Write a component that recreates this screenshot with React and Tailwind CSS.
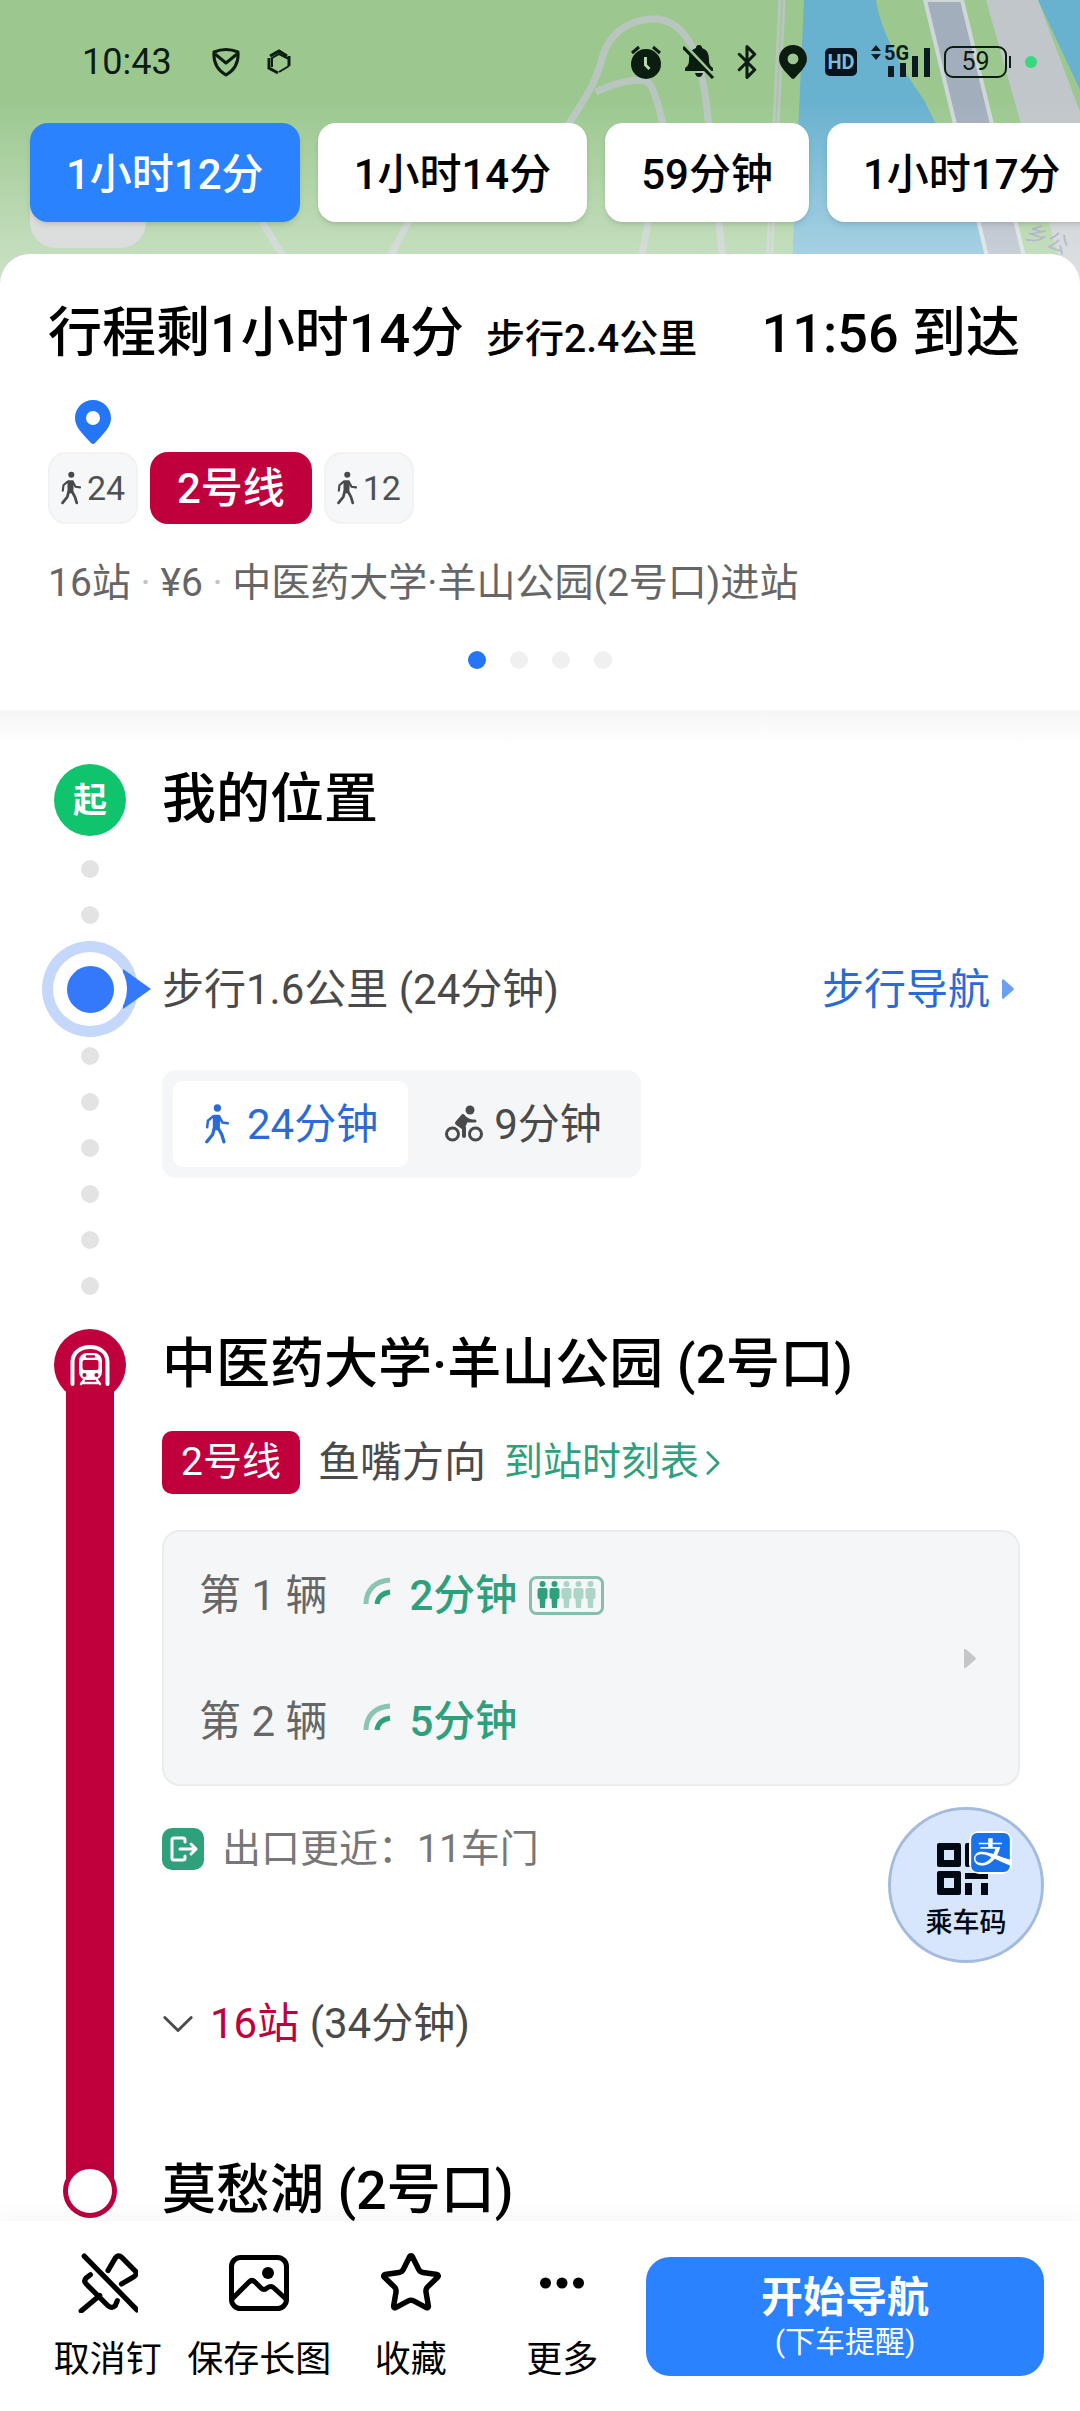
import React, { useState } from 'react';
import clsx from 'clsx';
import { Bluetooth, ChevronDown, ChevronRight, Star } from 'lucide-react';
import { SiAlipay } from 'react-icons/si';

const routes = ['1小时12分', '1小时14分', '59分钟', '1小时17分'];

const departures = [
  { order: '第 1 辆', wait: '2分钟', crowd: 2 },
  { order: '第 2 辆', wait: '5分钟' },
];

const PinIcon = ({ className }) => (
  <svg viewBox="0 0 36 44" className={className} fill="currentColor" aria-hidden="true">
    <path d="M18 0C8 0 0 8 0 18c0 9 7 15 16 25q2 2 4 0c9-10 16-16 16-25C36 8 28 0 18 0zm0 11a7 7 0 1 1 0 14 7 7 0 0 1 0-14z" />
  </svg>
);

const WalkIcon = ({ className }) => (
  <svg viewBox="-2 0 66 110" className={className} fill="none" stroke="currentColor" strokeLinecap="round" strokeLinejoin="round" aria-hidden="true">
    <circle cx="32" cy="11" r="10" fill="currentColor" stroke="none" />
    <path d="M24 34h12l-2 34H24z" fill="currentColor" strokeWidth="9" />
    <path d="M20 34L6 46 4 64M38 36l8 15 15 2" strokeWidth="7" />
    <path d="M34 66l10 18 6 20M23 68l-4 16L3 104" strokeWidth="9" />
  </svg>
);

const BikeIcon = ({ className }) => (
  <svg viewBox="0 0 38 40" className={className} fill="none" stroke="currentColor" strokeLinecap="round" strokeLinejoin="round" aria-hidden="true">
    <circle cx="7.5" cy="30" r="6" strokeWidth="3" />
    <circle cx="30.5" cy="30" r="6" strokeWidth="3" />
    <circle cx="25" cy="6" r="4.5" fill="currentColor" stroke="none" />
    <path d="M18 12l-6 7 7 5v8" strokeWidth="4" />
    <path d="M18 12l6 5h6M13 19l5-7 4 4-3 6z" strokeWidth="3" fill="currentColor" />
  </svg>
);

const Triangle = ({ className }) => (
  <svg viewBox="0 0 12 20" className={className} fill="currentColor" aria-hidden="true">
    <path d="M0 1.5Q0-.5 2 .8L11.4 9q1 1 0 2L2 19.2Q0 20.5 0 18.5z" />
  </svg>
);

const MapBackdrop = () => (
  <svg viewBox="0 0 1080 290" preserveAspectRatio="xMidYMin slice" className="absolute inset-x-0 top-0 h-[290px] w-full" aria-hidden="true">
    <defs>
      <linearGradient id="fade" x1="0" y1="0" x2="0" y2="1">
        <stop offset="0.35" stopColor="#fff" stopOpacity="0" />
        <stop offset="1" stopColor="#fff" stopOpacity="0.5" />
      </linearGradient>
    </defs>
    <rect width="1080" height="290" fill="#9cc890" />
    <g fill="none" stroke="#b9c6c0" strokeWidth="7">
      <path d="M565 130C590 90 595 85 603 55 612 28 635 18 658 19 690 24 700 60 706 100L726 290" />
      <path d="M596 92C625 78 645 78 650 84 656 95 660 110 664 130L636 290" />
      <path d="M782 0L768 290M262 222l42 68M412 215l-40 75" />
    </g>
    <path d="M782 0L768 290" fill="none" stroke="#a9c5a0" strokeWidth="2" />
    <path d="M804 0h72c5 30 20 60 48 100 20 40 35 70 82 190H791z" fill="#69b2cf" />
    <path d="M925 0h37l70 290h-37z" fill="#a2aebc" stroke="#cfd6d8" strokeWidth="4" />
    <path d="M986 0h52l60 160v130h-30z" fill="#c0c6c9" />
    <path d="M1038 0h42v90z" fill="#69b2cf" />
    <text x="1024" y="238" transform="rotate(22 1024 238)" fill="#8a90ae" fontSize="22">乡公</text>
    <rect width="1080" height="290" fill="url(#fade)" />
    <rect x="30" y="160" width="116" height="88" rx="26" fill="#dcdedd" />
  </svg>
);

const StatusBar = () => (
  <div className="relative flex h-12 items-center justify-between pr-[43px] pl-[82px] text-[#0b1c10]">
    <div className="flex items-center">
      <span className="text-[36px]">10:43</span>
      <svg viewBox="0 0 28 30" className="ml-10 h-[30px] w-7" fill="none" stroke="currentColor" strokeWidth="3" strokeLinejoin="round" aria-hidden="true">
        <path d="M2 5q12-5 24 0c1 12-5 19-12 23C7 24 1 17 2 5z" />
        <path d="M3 7l11 9L25 7" />
      </svg>
      <svg viewBox="0 0 24 26" className="ml-[27px] h-[26px] w-6" fill="none" stroke="currentColor" strokeWidth="2" aria-hidden="true">
        <path d="M2 9v10l9 5M22 17V7M3 7l9-5 8 5" strokeWidth="3" />
        <path d="M5 18V9l7-4 10 5M22 17l-10 6" />
      </svg>
    </div>
    <div className="flex items-center gap-[18px]">
      <div className="flex items-center gap-[21px]">
        <svg viewBox="0 0 32 34" className="h-[34px] w-8" aria-hidden="true">
          <circle cx="16" cy="19" r="15" fill="currentColor" />
          <path d="M2 8l7-6M30 8l-7-6" fill="none" stroke="currentColor" strokeWidth="3" />
          <path d="M15.5 12v8l4 4" fill="none" stroke="#b6d8ac" strokeWidth="3" />
        </svg>
        <svg viewBox="0 0 32 34" className="h-[34px] w-8" aria-hidden="true">
          <path d="M16 0q3 0 3 3c6 2 7 7 7 12 0 4 1 6 4 8v3H2v-3c3-2 4-4 4-8 0-5 1-10 7-12q0-3 3-3zM12 28h8q-1 4-4 4t-4-4z" fill="currentColor" />
          <path d="M2 0l30 32" stroke="#9cc890" strokeWidth="3" />
          <path d="M0 2l30 31" stroke="currentColor" strokeWidth="3" />
        </svg>
        <Bluetooth className="h-[34px] w-[22px]" viewBox="5.5 1 13 22" strokeWidth={2} />
        <PinIcon className="h-[34px] w-7" />
      </div>
      <div className="flex items-center gap-[14px]">
        <span className="flex h-7 w-8 items-center justify-center rounded-[5px] bg-[#04141f] text-[20px] font-bold text-[#7dbdd6]">HD</span>
        <div className="flex h-[34px] items-start gap-[3px] text-[#0b1c20]">
          <svg viewBox="0 0 10 16" className="h-4 w-[10px]" fill="currentColor" aria-hidden="true">
            <path d="M0 6l5-6 5 6zM0 9h10l-5 6z" />
          </svg>
          <div className="relative h-[34px] w-[46px]">
            <span className="absolute top-0 left-0 text-[20px] leading-4 font-bold">5G</span>
            <svg viewBox="0 0 46 34" className="h-[34px] w-[46px]" fill="currentColor" aria-hidden="true">
              <path d="M4 21h6v11H4zM16 18h6v14h-6zM28 11h6v21h-6zM40 3h6v29h-6z" />
            </svg>
          </div>
        </div>
        <div className="flex items-center gap-[2px]">
          <span className="flex h-8 w-[63px] items-center justify-center rounded-[9px] border-2 border-current text-[25px]">59</span>
          <span className="h-3 w-[2px] bg-current" />
        </div>
        <span className="size-3 rounded-full bg-[#38d97c]" />
      </div>
    </div>
  </div>
);

const RouteTabs = ({ active, onChange }) => (
  <div className="relative mt-[37px] flex gap-[18px] pl-[30px]">
    {routes.map((label, index) => (
      <button
        key={label}
        type="button"
        onClick={() => onChange(index)}
        className={clsx(
          'h-[99px] shrink-0 rounded-[18px] px-9 pt-1 text-[42px] font-medium shadow-md',
          index === active ? 'bg-[#2b82ff] text-white' : 'bg-white text-black'
        )}
      >
        {label}
      </button>
    ))}
  </div>
);

const WalkSegment = ({ minutes }) => (
  <div className="flex h-[72px] w-[90px] items-center justify-center gap-[6px] rounded-[18px] border-2 border-[#f0f2f4] bg-[#f5f7f8] text-[34px] text-[#4e5052]">
    <WalkIcon className="h-9 w-5 text-[#47494b]" />
    {minutes}
  </div>
);

const Summary = ({ active }) => (
  <section className="relative mt-8 rounded-t-[30px] bg-white pt-11 pb-[41px]">
    <div className="flex h-[72px] items-baseline justify-between pr-[60px] pl-12 leading-[72px]">
      <h1 className="text-[54px] font-medium">
        行程剩1小时14分<span className="ml-[22px] text-[39px]">步行2.4公里</span>
      </h1>
      <p className="text-[54px] font-medium">11:56 到达</p>
    </div>
    <div className="mt-[30px] flex items-end gap-3 px-12">
      <div className="flex flex-col items-center gap-2">
        <PinIcon className="h-11 w-9 text-[#2476f7]" />
        <WalkSegment minutes={24} />
      </div>
      <div className="flex h-[72px] items-center rounded-[18px] bg-[#c0003c] px-[27px] text-[42px] font-medium text-white">2号线</div>
      <WalkSegment minutes={12} />
    </div>
    <p className="mt-8 px-12 text-[39px] leading-[54px] text-[#666]">
      16站 <span className="text-[#c4c4c4]">·</span> ¥6 <span className="text-[#c4c4c4]">·</span> 中医药大学·羊山公园(2号口)进站
    </p>
    <div className="mt-[41px] flex justify-center gap-6">
      {routes.map((label, index) => (
        <span key={label} className={clsx('size-[18px] rounded-full', index === active ? 'bg-[#2476f7]' : 'bg-[#f0f0f0]')} />
      ))}
    </div>
  </section>
);

const Dots = ({ count }) => (
  <>
    {Array.from({ length: count }).map((_, index) => (
      <span key={index} className="size-[18px] shrink-0 rounded-full bg-[#e3e3e3]" />
    ))}
  </>
);

// One row of the timeline: the rail on the left, details on the right
const Step = ({ rail, children }) => (
  <div className="flex pr-[60px] pl-6">
    <div className="flex w-[132px] shrink-0 flex-col items-center">{rail}</div>
    <div className="min-w-0 flex-1 pl-[6px]">{children}</div>
  </div>
);

const StepTitle = ({ children }) => <h2 className="text-[54px] leading-[72px] font-medium">{children}</h2>;

const LocationMarker = () => (
  <div className="relative flex size-24 items-center justify-center rounded-full bg-[#c5d7fb]">
    <svg viewBox="0 0 30 40" className="absolute top-7 -right-[13px] h-10 w-[30px]" fill="#3478fb" aria-hidden="true">
      <path d="M2 0L30 20 2 40z" />
    </svg>
    <span className="relative flex size-[74px] items-center justify-center rounded-full bg-white">
      <span className="size-[47px] rounded-full bg-[#3478fb]" />
    </span>
  </div>
);

const MetroMarker = () => (
  <svg viewBox="0 0 72 72" className="relative size-[72px] shrink-0" fill="none" strokeLinecap="round" aria-hidden="true">
    <circle cx="36" cy="36" r="36" fill="#c0003c" />
    <path d="M18.5 55V33c0-20 35-20 35 0v22" stroke="#fff" strokeWidth="4" />
    <rect x="25" y="24" width="23" height="27" rx="8" fill="#fff" />
    <rect x="28.5" y="31" width="16" height="10" rx="2" fill="#c0003c" />
    <path d="M33 27.5h7" stroke="#c0003c" strokeWidth="2.5" />
    <circle cx="30.5" cy="46" r="2" fill="#c0003c" />
    <circle cx="42.5" cy="46" r="2" fill="#c0003c" />
    <path d="M30 51l-3 4M43 51l3 4M29 54h15" stroke="#fff" strokeWidth="2.5" />
  </svg>
);

const LiveIcon = () => (
  <svg viewBox="0 0 28 28" className="mb-2 size-7" fill="none" strokeWidth="5" aria-hidden="true">
    <path d="M3 27C3 13 12 4 27 3" stroke="#8cc4b1" />
    <path d="M14 27c1-7 6-11 13-12" stroke="#2fa07c" />
  </svg>
);

const CrowdIcon = ({ level }) => (
  <svg viewBox="0 0 75 39" className="h-[39px] w-[75px]" aria-hidden="true">
    <rect x="1.5" y="1.5" width="72" height="36" rx="6" fill="none" stroke="#86bfae" strokeWidth="3" />
    {[0, 1, 2, 3, 4].map((n) => (
      <g key={n} transform={`translate(${13.5 + n * 12} 0)`} fill={n < level ? '#2fa07c' : '#acd5c8'}>
        <circle cx="0" cy="8" r="3" />
        <path d="M-3 12h6q2 0 2 2v7q0 2-2 2l-.5 9h-5l-.5-9q-2 0-2-2v-7q0-2 2-2z" />
      </g>
    ))}
  </svg>
);

const TravelMode = () => {
  const [mode, setMode] = useState('walk');
  const base = 'flex h-[86px] items-center rounded-[10px] text-[42px]';
  return (
    <div className="mt-[33px] inline-flex h-[108px] items-center rounded-[14px] bg-[#f4f6f8] px-[11px]">
      <button type="button" onClick={() => setMode('walk')} className={clsx(base, 'gap-[18px] pr-[30px] pl-8', mode === 'walk' ? 'bg-white text-[#2a6bd6]' : 'text-[#4a4a4a]')}>
        <WalkIcon className="h-10 w-6" />
        24分钟
      </button>
      <button type="button" onClick={() => setMode('bike')} className={clsx(base, 'gap-[10px] pr-7 pl-9', mode === 'bike' ? 'bg-white text-[#2a6bd6]' : 'text-[#4a4a4a]')}>
        <BikeIcon className="size-10" />
        9分钟
      </button>
    </div>
  );
};

const RideCodeButton = () => (
  <button type="button" className="absolute -top-[21px] -right-6 flex size-[156px] flex-col items-center rounded-full border-[3px] border-[#a3bbdc] bg-[#d7e6fd] pt-[33px] text-[#000814]">
    <span className="relative pr-[6px]">
      <svg viewBox="0 0 52 52" className="size-[52px]" fill="currentColor" aria-hidden="true">
        <path fillRule="evenodd" d="M2 0h20q2 0 2 2v20q0 2-2 2H2q-2 0-2-2V2q0-2 2-2zm5 7v10h10V7zM2 28h20q2 0 2 2v20q0 2-2 2H2q-2 0-2-2V30q0-2 2-2zm5 7v10h10V35z" />
        <path d="M28 2q0-2 2-2h20v24H30q-2 0-2-2zM28 30h23v6H28zM28 40h7v12h-7zM44 40h7v12h-7z" />
      </svg>
      <span className="absolute -top-3 left-8 rounded-[10px] bg-white p-[2px]">
        <SiAlipay className="size-[39px] text-[#1b72e8]" />
      </span>
    </span>
    <span className="mt-[10px] text-[27px] leading-9 font-medium">乘车码</span>
  </button>
);

const UnpinIcon = () => (
  <svg viewBox="0 0 58 58" className="size-[60px]" fill="none" stroke="currentColor" strokeWidth="5" strokeLinecap="round" strokeLinejoin="round" aria-hidden="true">
    <path d="M6 3l51 52M29 17l7-12q3-4 6-1l13 13q3 3-1 6l-12 7M12 21l-4 3q-3 3 0 6l21 21q4 3 7 0l2-5M21 41L3 56" />
  </svg>
);

const ImageIcon = () => (
  <svg viewBox="0 0 60 58" className="size-[60px]" fill="none" stroke="currentColor" strokeWidth="5" strokeLinejoin="round" aria-hidden="true">
    <rect x="2.5" y="3.5" width="55" height="51" rx="9" />
    <path d="M3 45l17-17q3-3 6 0l6 6q3 3 6 0 4-3 7 0l13 12" />
    <circle cx="39" cy="19" r="6" fill="currentColor" stroke="none" />
  </svg>
);

const MoreIcon = () => (
  <svg viewBox="0 0 60 60" className="size-[60px]" fill="currentColor" aria-hidden="true">
    <circle cx="13.5" cy="30" r="5.5" />
    <circle cx="30" cy="30" r="5.5" />
    <circle cx="46.5" cy="30" r="5.5" />
  </svg>
);

const actions = [
  { label: '取消钉', icon: <UnpinIcon /> },
  { label: '保存长图', icon: <ImageIcon /> },
  { label: '收藏', icon: <Star className="size-[60px]" viewBox="1 1 22 22" strokeWidth={2} /> },
  { label: '更多', icon: <MoreIcon /> },
];

const BottomBar = () => (
  <nav className="relative -mt-[6px] flex gap-2 bg-white pr-9 pb-9 pl-8 shadow-[0_-8px_20px_rgba(0,0,0,0.03)]">
    <div className="grid flex-1 grid-cols-4 pt-8">
      {actions.map(({ label, icon }) => (
        <button key={label} type="button" className="flex flex-col items-center gap-[23px] text-[36px] leading-[48px] whitespace-nowrap">
          {icon}
          {label}
        </button>
      ))}
    </div>
    <button type="button" className="mt-9 flex h-[119px] w-[398px] flex-col items-center justify-center rounded-[24px] bg-[#2b82ff] text-white">
      <span className="text-[42px] leading-[50px] font-semibold">开始导航</span>
      <span className="text-[30px] leading-[38px]">(下车提醒)</span>
    </button>
  </nav>
);

const App = () => {
  const [active, setActive] = useState(0);

  return (
    <div className="relative min-h-screen overflow-hidden bg-white font-[Roboto,'Noto_Sans_CJK_SC',sans-serif] text-black">
      <MapBackdrop />
      <header className="pt-[38px]">
        <StatusBar />
        <RouteTabs active={active} onChange={setActive} />
      </header>
      <Summary active={active} />

      <main className="bg-linear-to-b from-[#f6f6f6] to-white to-[36px] pt-[54px]">
        <Step
          rail={
            <>
              <span className="flex size-[72px] items-center justify-center rounded-full bg-[#10c46d] text-[34px] font-bold text-white">起</span>
              <div className="flex flex-col gap-7 pt-6 pb-[17px]">
                <Dots count={2} />
              </div>
            </>
          }
        >
          <StepTitle>我的位置</StepTitle>
        </Step>

        <Step
          rail={
            <>
              <LocationMarker />
              <div className="flex flex-col gap-7 pt-[10px] pb-[34px]">
                <Dots count={6} />
              </div>
            </>
          }
        >
          <div className="flex h-24 items-center justify-between text-[42px]">
            <p className="text-[#4a4a4a]">步行1.6公里 (24分钟)</p>
            <a href="#walk" className="flex items-center gap-3 pr-[6px] text-[#2a6bd6]">
              步行导航
              <Triangle className="h-5 w-3 text-[#6b9ff2]" />
            </a>
          </div>
          <TravelMode />
        </Step>

        <Step
          rail={
            <>
              <MetroMarker />
              <span className="-mt-4 w-12 flex-1 bg-[#c0003c]" />
            </>
          }
        >
          <StepTitle>中医药大学·羊山公园 (2号口)</StepTitle>
          <div className="mt-[30px] flex h-[63px] items-center text-[39px]">
            <span className="flex h-full items-center rounded-[10px] bg-[#c0003c] px-[19px] text-white">2号线</span>
            <span className="ml-[18px] text-[42px] text-[#4a4a4a]">鱼嘴方向</span>
            <a href="#timetable" className="ml-[18px] flex items-center gap-1 text-[#2fa07c]">
              到站时刻表
              <ChevronRight className="h-7 w-5" viewBox="7 4 10 16" strokeWidth={1.5} />
            </a>
          </div>
          <div className="mt-9 flex items-center justify-between rounded-[18px] border-2 border-[#eaecee] bg-[#f4f6f8] pr-[42px] pl-[35px]">
            <ul>
              {departures.map(({ order, wait, crowd }) => (
                <li key={order} className="flex h-[126px] items-center text-[42px] text-[#666]">
                  {order}
                  <span className="mr-[18px] ml-9">
                    <LiveIcon />
                  </span>
                  <span className="mr-3 font-medium text-[#2fa07c]">{wait}</span>
                  {crowd && <CrowdIcon level={crowd} />}
                </li>
              ))}
            </ul>
            <Triangle className="h-[21px] w-3 text-[#c4c6c8]" />
          </div>
          <div className="relative mt-[42px] flex h-[42px] items-center gap-[18px] text-[39px] text-[#777]">
            <svg viewBox="0 0 42 42" className="size-[42px] rounded-[10px] bg-[#2fa07c]" fill="none" stroke="#fff" strokeWidth="3" strokeLinecap="round" strokeLinejoin="round" aria-hidden="true">
              <path d="M23 14v-2q0-2-2-2h-9q-2 0-2 2v18q0 2 2 2h9q2 0 2-2v-2M18 21h16M29 16l5 5-5 5" />
            </svg>
            出口更近：11车门
            <RideCodeButton />
          </div>
          <button type="button" className="mt-[127px] mb-[104px] flex items-center text-[42px] leading-[54px] text-[#4a4a4a]">
            <ChevronDown className="mr-4 h-[22px] w-8" viewBox="5 7 14 10" strokeWidth={1.3} />
            <span className="text-[#c0003c]">16站</span>&nbsp;(34分钟)
          </button>
        </Step>

        <Step
          rail={
            <>
              <span className="h-[26px] w-12 bg-[#c0003c]" />
              <span className="-mt-[17px] size-[54px] rounded-full border-[5px] border-[#b8003f] bg-white" />
            </>
          }
        >
          <StepTitle>莫愁湖 (2号口)</StepTitle>
        </Step>
      </main>

      <BottomBar />
    </div>
  );
};

export default App;
